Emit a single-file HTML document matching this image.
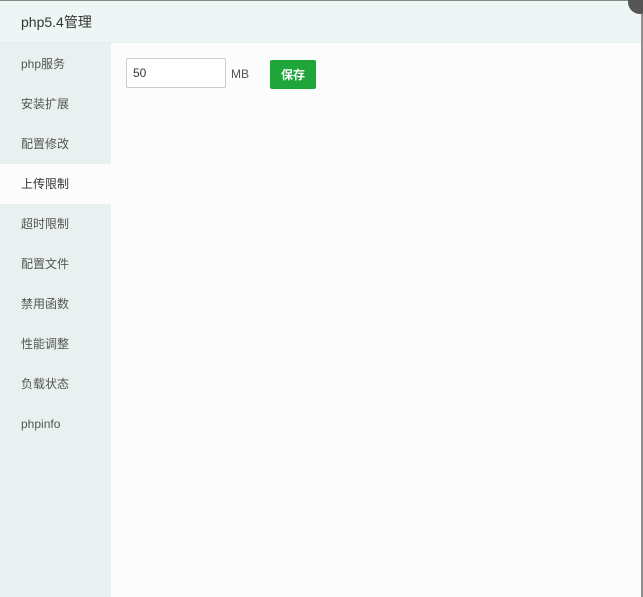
<!DOCTYPE html>
<html><head><meta charset="utf-8"><style>
*{margin:0;padding:0;box-sizing:border-box}
body{width:643px;height:597px;overflow:hidden;background:#fcfcfc;font-family:"Liberation Sans","Noto Sans CJK SC",sans-serif;position:relative}
.frame{position:absolute;left:0;top:0;width:641px;height:597px;border-top:1px solid #8a8a8a;background:#fcfcfc}
.edge{position:absolute;right:0;top:0;width:2px;height:597px;background:#8f8f8f}
.head{position:absolute;left:0;top:1px;width:641px;height:42px;background:#eef5f5;border-bottom:1px solid #e4ecec;font-size:14px;color:#333;line-height:43px;padding-left:21px}
.side{position:absolute;left:0;top:43px;width:111px;height:554px;background:#e9f0f0;padding-top:1px}
.side div{height:40px;line-height:40px;padding-left:21px;font-size:12px;color:#555}
.side .on{background:#fcfcfc;color:#333}
.inp{position:absolute;left:126px;top:58px;width:100px;height:30px;border:1px solid #ccc;border-radius:2px;background:#fff;font-size:12px;line-height:29px;padding-left:6px;color:#333}
.mb{position:absolute;left:231px;top:59px;line-height:30px;font-size:12px;color:#555}
.btn{position:absolute;left:270px;top:60px;width:46px;height:29px;background:#20a53a;border-radius:2px;color:#fff;font-size:12px;font-weight:bold;line-height:30px;text-align:center}
.close{position:absolute;left:628px;top:-10px;width:24px;height:24px;border-radius:50%;background:#555}
</style></head><body>
<div class="frame"></div>
<div class="head">php5.4管理</div>
<div class="side">
<div>php服务</div><div>安装扩展</div><div>配置修改</div><div class="on">上传限制</div><div>超时限制</div><div>配置文件</div><div>禁用函数</div><div>性能调整</div><div>负载状态</div><div>phpinfo</div>
</div>
<div class="inp">50</div>
<div class="mb">MB</div>
<div class="btn">保存</div>
<div class="edge"></div>
<div class="close"></div>
</body></html>
